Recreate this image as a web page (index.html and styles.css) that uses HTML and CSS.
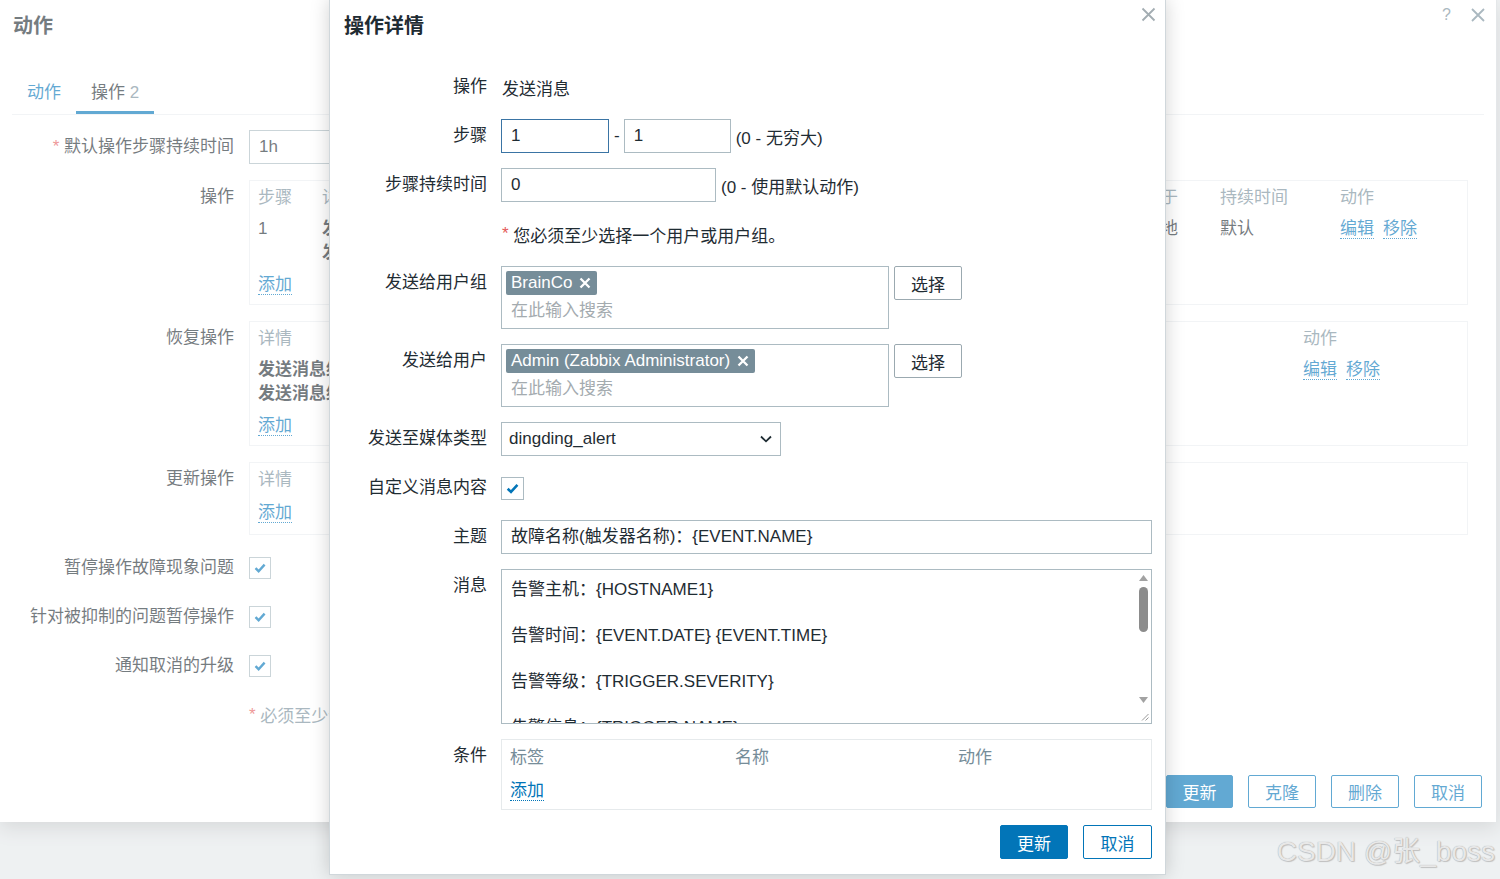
FILE: index.html
```html
<!DOCTYPE html>
<html lang="zh-CN">
  <head>
    <meta charset="UTF-8" />
    <meta name="viewport" content="width=device-width, initial-scale=1.0" />
    <title>动作</title>
    <link rel="stylesheet" href="styles.css">
  </head>
  <body>
    <!-- 背景里的动作对话框 -->
    <div class="dialog">
      <div class="dialog-head">
        <h4 class="dialog-title">动作</h4>
        <div class="head-tools">
          <span class="help">?</span>
          <svg class="close-icon" width="14" height="14" viewBox="0 0 14 14"><path d="M1 1L13 13M13 1L1 13" stroke="#768d99" stroke-width="1.8" fill="none"/></svg>
        </div>
      </div>

      <ul class="tabs">
        <li class="tab">动作</li>
        <li class="tab active">操作 <span class="tab-count">2</span></li>
      </ul>

      <div class="bg-form">
        <div class="label"><span class="req">*</span> 默认操作步骤持续时间</div>
        <div class="field"><div class="input w-300">1h</div></div>

        <div class="label">操作</div>
        <div class="field">
          <div class="op-box">
            <table class="op-table">
              <colgroup><col class="c-step"><col class="c-detail"><col class="c-start"><col class="c-dur"><col></colgroup>
              <tr><th>步骤</th><th>详情</th><th>开始于</th><th>持续时间</th><th>动作</th></tr>
              <tr>
                <td>1</td>
                <td><b>发送消息给用户组：</b>BrainCo 通过 所有介质<br><b>发送消息给用户：</b>Admin (Zabbix Administrator) 通过 所有介质</td>
                <td>立即地</td>
                <td>默认</td>
                <td><span class="link">编辑</span><span class="link gap">移除</span></td>
              </tr>
            </table>
            <div class="add-row"><span class="link">添加</span></div>
          </div>
        </div>

        <div class="label">恢复操作</div>
        <div class="field">
          <div class="op-box">
            <table class="op-table">
              <colgroup><col class="c-rdetail"><col></colgroup>
              <tr><th>详情</th><th>动作</th></tr>
              <tr>
                <td><b>发送消息给用户组：BrainCo 通过 所有介质</b><br><b>发送消息给用户：Admin (Zabbix Administrator) 通过 所有介质</b></td>
                <td><span class="link">编辑</span><span class="link gap">移除</span></td>
              </tr>
            </table>
            <div class="add-row"><span class="link">添加</span></div>
          </div>
        </div>

        <div class="label">更新操作</div>
        <div class="field">
          <div class="op-box short">
            <table class="op-table">
              <tr><th>详情</th></tr>
            </table>
            <div class="add-row"><span class="link">添加</span></div>
          </div>
        </div>

        <div class="label row-33">暂停操作故障现象问题</div>
        <div class="field row-33">
          <span class="checkbox small"><svg width="14" height="14" viewBox="0 0 14 14"><path d="M2.5 7.2L5.6 10.2L11.6 3.6" fill="none" stroke="#0275b8" stroke-width="2.4"/></svg></span>
        </div>

        <div class="label row-33">针对被抑制的问题暂停操作</div>
        <div class="field row-33">
          <span class="checkbox small"><svg width="14" height="14" viewBox="0 0 14 14"><path d="M2.5 7.2L5.6 10.2L11.6 3.6" fill="none" stroke="#0275b8" stroke-width="2.4"/></svg></span>
        </div>

        <div class="label row-33">通知取消的升级</div>
        <div class="field row-33">
          <span class="checkbox small"><svg width="14" height="14" viewBox="0 0 14 14"><path d="M2.5 7.2L5.6 10.2L11.6 3.6" fill="none" stroke="#0275b8" stroke-width="2.4"/></svg></span>
        </div>

        <div class="label row-33"></div>
        <div class="field row-33 muted"><span class="req">*</span>&nbsp;必须至少设置一个问题、恢复或更新操作。</div>
      </div>

      <div class="dialog-foot">
        <button class="btn primary w-67">更新</button>
        <button class="btn">克隆</button>
        <button class="btn">删除</button>
        <button class="btn">取消</button>
      </div>
    </div>

    <div class="overlay"></div>

    <!-- 操作详情弹窗 -->
    <div class="modal">
      <div class="modal-head">
        <h4 class="modal-title">操作详情</h4>
        <svg class="modal-close" width="15" height="15" viewBox="0 0 15 15"><path d="M1.5 1.5L13.5 13.5M13.5 1.5L1.5 13.5" stroke="#a3adb2" stroke-width="1.8" fill="none"/></svg>
      </div>

      <div class="modal-form">
        <div class="label">操作</div>
        <div class="field">发送消息</div>

        <div class="label">步骤</div>
        <div class="field">
          <div class="input focus w-step1">1</div>
          <span class="dash">-</span>
          <div class="input w-step2">1</div>
          <span class="hint">(0 - 无穷大)</span>
        </div>

        <div class="label">步骤持续时间</div>
        <div class="field">
          <div class="input w-dur">0</div>
          <span class="hint">(0 - 使用默认动作)</span>
        </div>

        <div class="label"></div>
        <div class="field"><span class="req">*</span>&nbsp;您必须至少选择一个用户或用户组。</div>

        <div class="label">发送给用户组</div>
        <div class="field top">
          <div class="multi">
            <span class="tag">BrainCo<svg width="12" height="12" viewBox="0 0 12 12"><path d="M1.5 1.5L10.5 10.5M10.5 1.5L1.5 10.5" stroke="#fff" stroke-width="2.3" fill="none"/></svg></span>
            <div class="search">在此输入搜索</div>
          </div>
          <button class="btn-grey">选择</button>
        </div>

        <div class="label">发送给用户</div>
        <div class="field top">
          <div class="multi">
            <span class="tag">Admin (Zabbix Administrator)<svg width="12" height="12" viewBox="0 0 12 12"><path d="M1.5 1.5L10.5 10.5M10.5 1.5L1.5 10.5" stroke="#fff" stroke-width="2.3" fill="none"/></svg></span>
            <div class="search">在此输入搜索</div>
          </div>
          <button class="btn-grey">选择</button>
        </div>

        <div class="label">发送至媒体类型</div>
        <div class="field">
          <div class="select">
            <span>dingding_alert</span>
            <svg width="12" height="8" viewBox="0 0 12 8"><path d="M1 1.5L6 6.3L11 1.5" fill="none" stroke="#1f2c33" stroke-width="1.8"/></svg>
          </div>
        </div>

        <div class="label">自定义消息内容</div>
        <div class="field">
          <span class="checkbox"><svg width="15" height="15" viewBox="0 0 14 14"><path d="M2.5 7.2L5.6 10.2L11.6 3.6" fill="none" stroke="#0275b8" stroke-width="2.4"/></svg></span>
        </div>

        <div class="label">主题</div>
        <div class="field"><div class="input w-full">故障名称(触发器名称)：{EVENT.NAME}</div></div>

        <div class="label">消息</div>
        <div class="field top">
          <div class="textarea">
            <div class="ta-text">告警主机：{HOSTNAME1}

告警时间：{EVENT.DATE} {EVENT.TIME}

告警等级：{TRIGGER.SEVERITY}

告警信息：{TRIGGER.NAME}

告警项目：{TRIGGER.KEY1}</div>
            <div class="ta-scroll">
              <span class="arrow"><svg width="9" height="6" viewBox="0 0 9 6"><path d="M0 6L4.5 0L9 6Z" fill="#a2a2a2"/></svg></span>
              <span class="thumb"></span>
              <span class="track"></span>
              <span class="arrow"><svg width="9" height="6" viewBox="0 0 9 6"><path d="M0 0L4.5 6L9 0Z" fill="#a2a2a2"/></svg></span>
              <span class="corner"><svg width="8" height="8" viewBox="0 0 8 8"><path d="M7.5 1L1 7.5M7.5 4.5L4.5 7.5" stroke="#9a9a9a" stroke-width="1" fill="none"/></svg></span>
            </div>
          </div>
        </div>

        <div class="label">条件</div>
        <div class="field top">
          <div class="cond-box">
            <div class="cond-head">
              <span>标签</span>
              <span>名称</span>
              <span>动作</span>
            </div>
            <div class="cond-add"><span class="link">添加</span></div>
          </div>
        </div>
      </div>

      <div class="modal-foot">
        <button class="btn primary">更新</button>
        <button class="btn w-69">取消</button>
      </div>
    </div>

    <div class="watermark">CSDN @张_boss</div>
  </body>
</html>
```

FILE: styles.css
```css
* {
  box-sizing: border-box;
}
body {
  margin: 0;
  width: 1500px;
  height: 879px;
  overflow: hidden;
  position: relative;
  background: #e4e8ea;
  font-family: "Liberation Sans", "Noto Sans CJK SC", sans-serif;
  font-size: 17px;
  color: #1f2c33;
}

/* 背景对话框 */
.dialog {
  width: 1497px;
  height: 822px;
  background: #fff;
  padding: 0 12px;
  border-right: 1px solid #d3d9dc;
  box-shadow: 0 6px 18px rgba(0, 0, 0, 0.16);
}
.dialog-head {
  display: flex;
  justify-content: space-between;
  align-items: flex-start;
  height: 50px;
}
.dialog-title {
  margin: 0 0 0 1px;
  font-size: 20px;
  font-weight: bold;
  line-height: 52px;
}
.head-tools {
  display: flex;
  align-items: center;
  gap: 20px;
  margin-top: 5px;
  margin-right: -1px;
}
.help {
  color: #768d99;
  font-size: 16px;
  line-height: 20px;
}
.tabs {
  list-style: none;
  margin: 18px 0 0;
  padding: 0;
  display: flex;
  border-bottom: 1px solid #ebeef0;
}
.tab {
  padding: 13px 15px 6px;
  line-height: 24px;
  color: #0275b8;
  border-bottom: 3px solid transparent;
}
.tab.active {
  color: #1f2c33;
  border-bottom-color: #0275b8;
}
.tab-count {
  color: #768d99;
}

.bg-form {
  display: grid;
  grid-template-columns: 222px 1219px;
  column-gap: 15px;
  row-gap: 16px;
  margin-top: 15px;
}
.label {
  text-align: right;
  line-height: 34px;
  white-space: nowrap;
}
.label.row-33 {
  line-height: 33px;
}
.field {
  display: flex;
  align-items: center;
  min-height: 34px;
  white-space: nowrap;
}
.field.row-33 {
  min-height: 33px;
}
.field.top {
  align-items: flex-start;
}
.muted {
  color: #768d99;
}
.req {
  color: #e45959;
}
.w-300 {
  width: 300px;
}

.op-box {
  width: 100%;
  border: 1px solid #ebeef0;
  padding: 2px 8px 7px;
}
.op-box.short {
  padding-bottom: 9px;
}
.op-table {
  width: 100%;
  table-layout: fixed;
  border-collapse: collapse;
}
.op-table th {
  text-align: left;
  font-weight: normal;
  color: #768d99;
  padding: 3px 0;
  line-height: 24px;
  white-space: nowrap;
  overflow: hidden;
}
.op-table td {
  padding: 4px 0;
  line-height: 24px;
  vertical-align: top;
  white-space: nowrap;
  overflow: hidden;
}
.c-step {
  width: 64px;
}
.c-detail {
  width: 805px;
}
.c-start {
  width: 93px;
}
.c-dur {
  width: 120px;
}
.c-rdetail {
  width: 1045px;
}
.add-row {
  margin-top: 4px;
  line-height: 24px;
}
.op-box.short .add-row {
  margin-top: 6px;
}
.link {
  color: #0275b8;
  border-bottom: 1px dotted #0275b8;
}
.link.gap {
  margin-left: 9px;
}

.checkbox {
  width: 23px;
  height: 23px;
  border: 1px solid #acbbc2;
  background: #fff;
  display: flex;
  align-items: center;
  justify-content: center;
}
.checkbox.small {
  width: 22px;
  height: 22px;
}

.dialog-foot {
  display: flex;
  justify-content: flex-end;
  gap: 15px;
  margin-top: 44px;
  margin-right: 2px;
}
.btn {
  width: 68px;
  height: 33px;
  border: 1px solid #0275b8;
  border-radius: 2px;
  background: #fff;
  color: #0275b8;
  font-family: inherit;
  font-size: 17px;
  padding: 0;
}
.btn.primary {
  background: #0275b8;
  color: #fff;
}
.w-67 {
  width: 67px;
}
.w-69 {
  width: 69px;
}

.overlay {
  position: absolute;
  left: 0;
  top: 0;
  right: 0;
  bottom: 0;
  background: rgba(255, 255, 255, 0.38);
}

/* 操作详情弹窗 */
.modal {
  position: absolute;
  left: 329px;
  top: -1px;
  width: 837px;
  height: 876px;
  background: #fff;
  border: 1px solid #d0d7db;
  box-shadow: 0 0 18px rgba(0, 0, 0, 0.18);
  padding: 0 13px 16px 14px;
}
.modal-head {
  display: flex;
  justify-content: space-between;
  align-items: flex-start;
  height: 50px;
}
.modal-title {
  margin: 0;
  font-size: 20px;
  font-weight: bold;
  line-height: 52px;
}
.modal-close {
  margin-top: 7px;
  margin-right: -4px;
}
.modal-form {
  display: grid;
  grid-template-columns: 143px 651px;
  column-gap: 14px;
  row-gap: 15px;
  margin-top: 20px;
}
.modal-form .field {
  padding-left: 1px;
}
.input {
  height: 34px;
  border: 1px solid #acbbc2;
  padding: 0 9px;
  line-height: 32px;
  background: #fff;
  white-space: nowrap;
  overflow: hidden;
}
.modal-form .input,
.modal-form .multi,
.modal-form .select,
.modal-form .checkbox,
.modal-form .textarea,
.modal-form .cond-box {
  margin-left: -1px;
}
.input.focus {
  border-color: #3a74a4;
}
.w-step1 {
  width: 108px;
}
.w-step2 {
  width: 107px;
}
.w-dur {
  width: 215px;
}
.w-full {
  width: 651px;
}
.dash {
  margin: 0 5px;
}
.hint {
  margin-left: 5px;
}

.multi {
  width: 388px;
  border: 1px solid #acbbc2;
  padding: 4px 4px 3px;
}
.tag {
  display: inline-flex;
  align-items: center;
  height: 24px;
  line-height: 24px;
  padding: 0 6px 0 5px;
  background: #768d99;
  color: #fff;
  border-radius: 2px;
}
.tag svg {
  margin-left: 7px;
}
.search {
  margin-top: 2px;
  line-height: 28px;
  padding-left: 5px;
  color: #a4abaf;
}
.btn-grey {
  margin-left: 5px;
  width: 68px;
  height: 34px;
  border: 1px solid #9ba9b0;
  border-radius: 2px;
  background: #fff;
  color: #1f2c33;
  font-family: inherit;
  font-size: 17px;
  padding: 0;
}

.select {
  width: 280px;
  height: 34px;
  border: 1px solid #acbbc2;
  padding: 0 8px 0 7px;
  display: flex;
  align-items: center;
  justify-content: space-between;
}

.textarea {
  width: 651px;
  height: 155px;
  border: 1px solid #acbbc2;
  display: flex;
  overflow: hidden;
}
.ta-text {
  flex: 1;
  padding: 8px 9px;
  line-height: 23px;
  white-space: pre;
  overflow: hidden;
}
.ta-scroll {
  width: 15px;
  display: flex;
  flex-direction: column;
  align-items: center;
}
.arrow {
  height: 16px;
  display: flex;
  align-items: center;
  justify-content: center;
}
.thumb {
  width: 9px;
  height: 45px;
  margin-top: 1px;
  border-radius: 5px;
  background: #8c8c8c;
}
.track {
  flex: 1;
}
.corner {
  width: 15px;
  height: 15px;
  display: flex;
  align-items: flex-end;
  justify-content: flex-end;
  padding: 0 2px 2px 0;
}

.cond-box {
  width: 651px;
  border: 1px solid #e6eaec;
  padding: 3px 8px 6px;
}
.cond-head {
  display: grid;
  grid-template-columns: 225px 223px 1fr;
  color: #768d99;
  padding: 3px 0;
  line-height: 24px;
}
.cond-add {
  margin-top: 6px;
  line-height: 24px;
}

.modal-foot {
  display: flex;
  justify-content: flex-end;
  gap: 15px;
  margin-top: 15px;
}
.modal-foot .btn {
  height: 34px;
}

.watermark {
  position: absolute;
  right: 5px;
  top: 834px;
  font-family: "Liberation Sans", "Noto Sans CJK SC", sans-serif;
  font-size: 28px;
  line-height: 36px;
  color: #e8e8e8;
  text-shadow: 0 0 1px #9c9c9c, 1px 1px 1px #c4c4c4;
}
```
